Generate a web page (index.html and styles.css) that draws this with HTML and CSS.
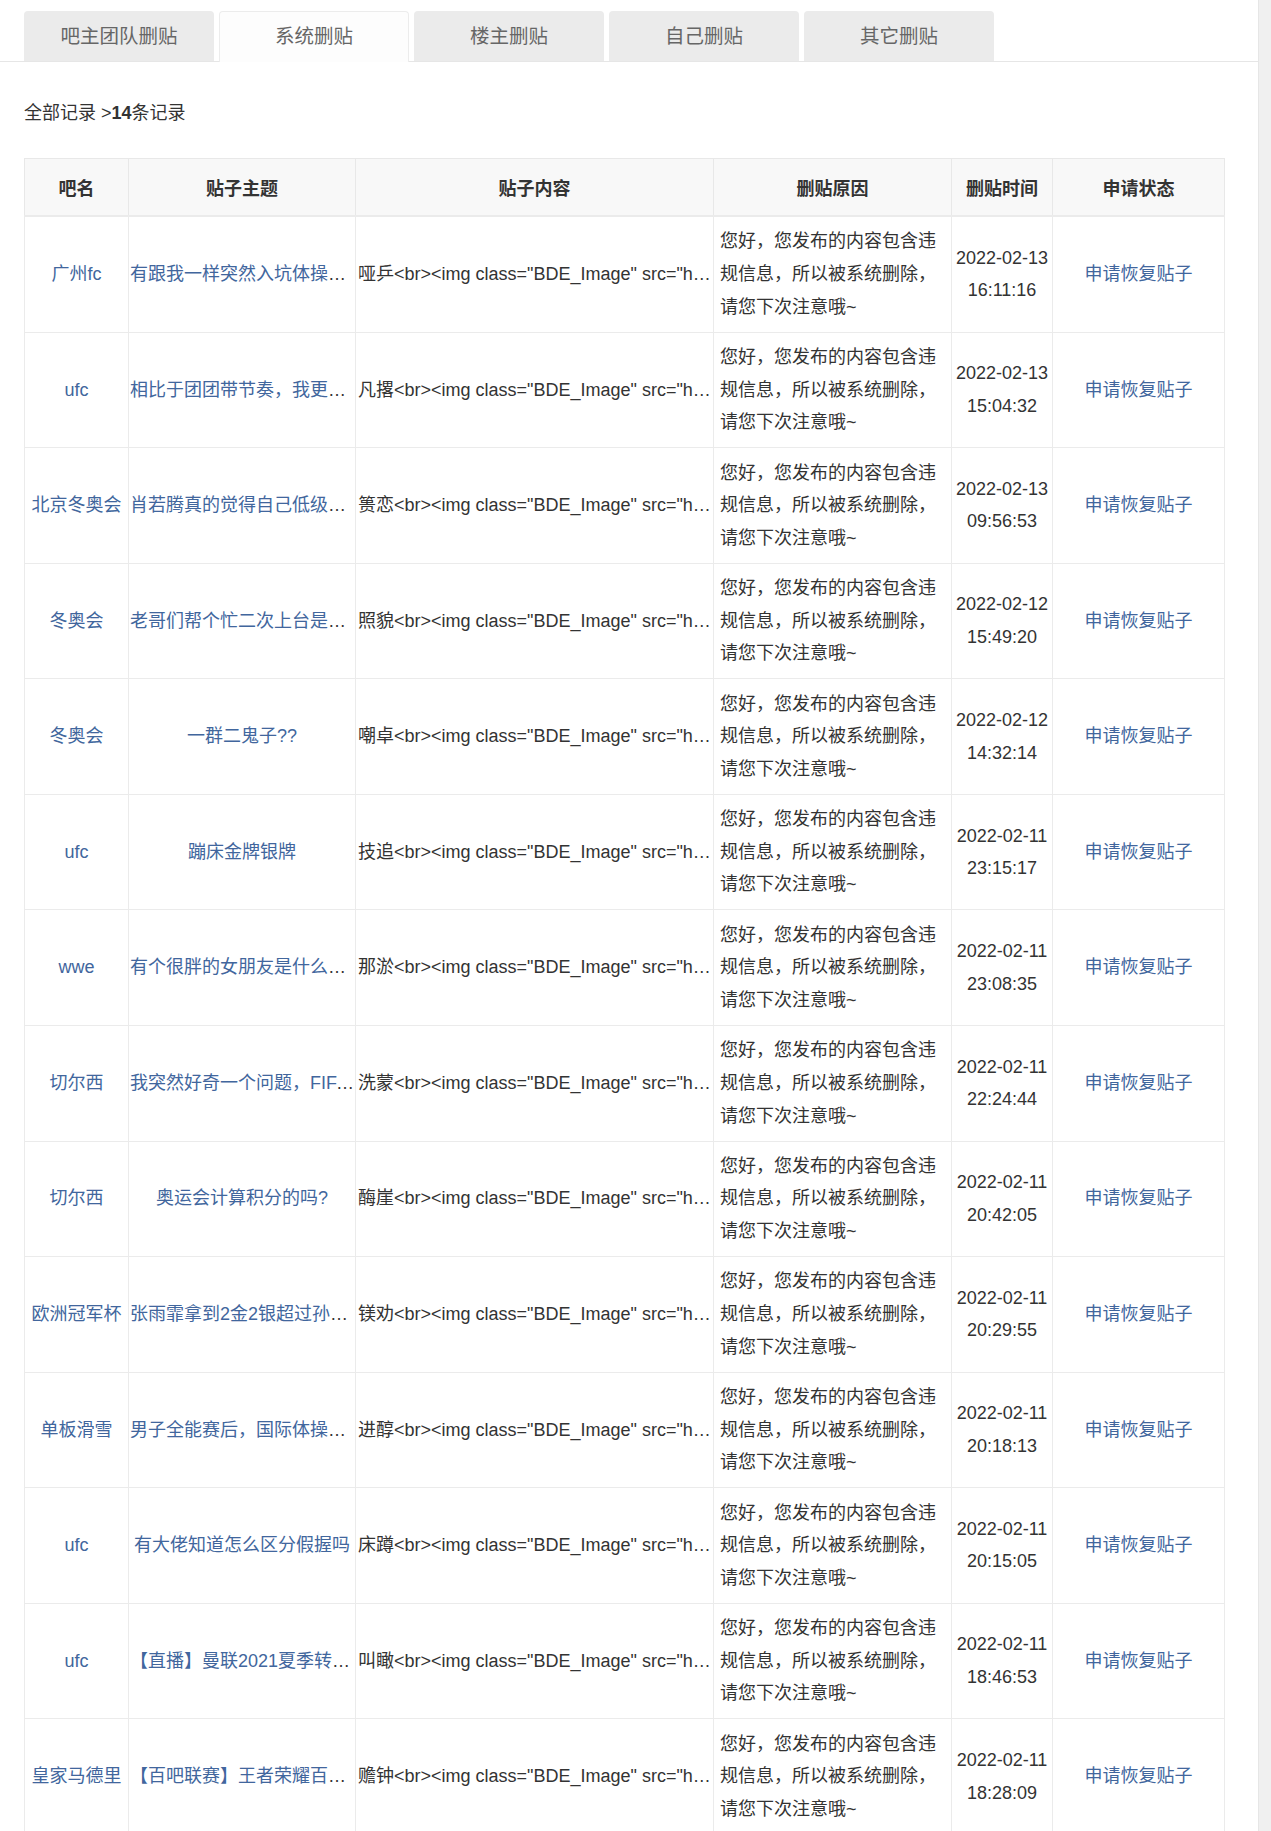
FILE: index.html
```html
<!DOCTYPE html>
<html lang="zh-CN">
<head>
<meta charset="utf-8">
<title>删贴记录</title>
<link rel="stylesheet" href="styles.css">
</head>
<body>
<div class="page">
  <div class="tabs">
    <a class="tab">吧主团队删贴</a>
    <a class="tab active">系统删贴</a>
    <a class="tab">楼主删贴</a>
    <a class="tab">自己删贴</a>
    <a class="tab">其它删贴</a>
  </div>
  <div class="crumb">全部记录 &gt;<b>14</b>条记录</div>
  <table class="records">
    <colgroup>
      <col class="c-bar"><col class="c-title"><col class="c-content"><col class="c-reason"><col class="c-time"><col class="c-status">
    </colgroup>
    <thead>
      <tr><th>吧名</th><th>贴子主题</th><th>贴子内容</th><th>删贴原因</th><th>删贴时间</th><th>申请状态</th></tr>
    </thead>
    <tbody>
      <tr><td class="bar"><a>广州fc</a></td><td class="title"><div class="clip"><a>有跟我一样突然入坑体操的吗</a></div></td><td class="content"><div class="clip">哑乒&lt;br&gt;&lt;img class="BDE_Image" src="https://imgsa.baidu.com/forum/pic/item/a1.jpg"&gt;</div></td><td class="reason">您好，您发布的内容包含违规信息，所以被系统删除，请您下次注意哦~</td><td class="time">2022-02-13 16:11:16</td><td class="status"><a>申请恢复贴子</a></td></tr>
      <tr><td class="bar"><a>ufc</a></td><td class="title"><div class="clip"><a>相比于团团带节奏，我更想知道</a></div></td><td class="content"><div class="clip">凡撂&lt;br&gt;&lt;img class="BDE_Image" src="https://imgsa.baidu.com/forum/pic/item/a2.jpg"&gt;</div></td><td class="reason">您好，您发布的内容包含违规信息，所以被系统删除，请您下次注意哦~</td><td class="time">2022-02-13 15:04:32</td><td class="status"><a>申请恢复贴子</a></td></tr>
      <tr><td class="bar"><a>北京冬奥会</a></td><td class="title"><div class="clip"><a>肖若腾真的觉得自己低级失误吗</a></div></td><td class="content"><div class="clip">篑恋&lt;br&gt;&lt;img class="BDE_Image" src="https://imgsa.baidu.com/forum/pic/item/a3.jpg"&gt;</div></td><td class="reason">您好，您发布的内容包含违规信息，所以被系统删除，请您下次注意哦~</td><td class="time">2022-02-13 09:56:53</td><td class="status"><a>申请恢复贴子</a></td></tr>
      <tr><td class="bar"><a>冬奥会</a></td><td class="title"><div class="clip"><a>老哥们帮个忙二次上台是什么</a></div></td><td class="content"><div class="clip">照貌&lt;br&gt;&lt;img class="BDE_Image" src="https://imgsa.baidu.com/forum/pic/item/a4.jpg"&gt;</div></td><td class="reason">您好，您发布的内容包含违规信息，所以被系统删除，请您下次注意哦~</td><td class="time">2022-02-12 15:49:20</td><td class="status"><a>申请恢复贴子</a></td></tr>
      <tr><td class="bar"><a>冬奥会</a></td><td class="title"><div class="clip"><a>一群二鬼子??</a></div></td><td class="content"><div class="clip">嘲卓&lt;br&gt;&lt;img class="BDE_Image" src="https://imgsa.baidu.com/forum/pic/item/a5.jpg"&gt;</div></td><td class="reason">您好，您发布的内容包含违规信息，所以被系统删除，请您下次注意哦~</td><td class="time">2022-02-12 14:32:14</td><td class="status"><a>申请恢复贴子</a></td></tr>
      <tr><td class="bar"><a>ufc</a></td><td class="title"><div class="clip"><a>蹦床金牌银牌</a></div></td><td class="content"><div class="clip">技追&lt;br&gt;&lt;img class="BDE_Image" src="https://imgsa.baidu.com/forum/pic/item/a6.jpg"&gt;</div></td><td class="reason">您好，您发布的内容包含违规信息，所以被系统删除，请您下次注意哦~</td><td class="time">2022-02-11 23:15:17</td><td class="status"><a>申请恢复贴子</a></td></tr>
      <tr><td class="bar"><a>wwe</a></td><td class="title"><div class="clip"><a>有个很胖的女朋友是什么体验</a></div></td><td class="content"><div class="clip">那淤&lt;br&gt;&lt;img class="BDE_Image" src="https://imgsa.baidu.com/forum/pic/item/a7.jpg"&gt;</div></td><td class="reason">您好，您发布的内容包含违规信息，所以被系统删除，请您下次注意哦~</td><td class="time">2022-02-11 23:08:35</td><td class="status"><a>申请恢复贴子</a></td></tr>
      <tr><td class="bar"><a>切尔西</a></td><td class="title"><div class="clip"><a>我突然好奇一个问题，FIFA的</a></div></td><td class="content"><div class="clip">洗蒙&lt;br&gt;&lt;img class="BDE_Image" src="https://imgsa.baidu.com/forum/pic/item/a8.jpg"&gt;</div></td><td class="reason">您好，您发布的内容包含违规信息，所以被系统删除，请您下次注意哦~</td><td class="time">2022-02-11 22:24:44</td><td class="status"><a>申请恢复贴子</a></td></tr>
      <tr><td class="bar"><a>切尔西</a></td><td class="title"><div class="clip"><a>奥运会计算积分的吗?</a></div></td><td class="content"><div class="clip">酶崖&lt;br&gt;&lt;img class="BDE_Image" src="https://imgsa.baidu.com/forum/pic/item/a9.jpg"&gt;</div></td><td class="reason">您好，您发布的内容包含违规信息，所以被系统删除，请您下次注意哦~</td><td class="time">2022-02-11 20:42:05</td><td class="status"><a>申请恢复贴子</a></td></tr>
      <tr><td class="bar"><a>欧洲冠军杯</a></td><td class="title"><div class="clip"><a>张雨霏拿到2金2银超过孙杨了吗</a></div></td><td class="content"><div class="clip">镁劝&lt;br&gt;&lt;img class="BDE_Image" src="https://imgsa.baidu.com/forum/pic/item/b1.jpg"&gt;</div></td><td class="reason">您好，您发布的内容包含违规信息，所以被系统删除，请您下次注意哦~</td><td class="time">2022-02-11 20:29:55</td><td class="status"><a>申请恢复贴子</a></td></tr>
      <tr><td class="bar"><a>单板滑雪</a></td><td class="title"><div class="clip"><a>男子全能赛后，国际体操联合会</a></div></td><td class="content"><div class="clip">进醇&lt;br&gt;&lt;img class="BDE_Image" src="https://imgsa.baidu.com/forum/pic/item/b2.jpg"&gt;</div></td><td class="reason">您好，您发布的内容包含违规信息，所以被系统删除，请您下次注意哦~</td><td class="time">2022-02-11 20:18:13</td><td class="status"><a>申请恢复贴子</a></td></tr>
      <tr><td class="bar"><a>ufc</a></td><td class="title"><div class="clip"><a>有大佬知道怎么区分假握吗</a></div></td><td class="content"><div class="clip">床蹲&lt;br&gt;&lt;img class="BDE_Image" src="https://imgsa.baidu.com/forum/pic/item/b3.jpg"&gt;</div></td><td class="reason">您好，您发布的内容包含违规信息，所以被系统删除，请您下次注意哦~</td><td class="time">2022-02-11 20:15:05</td><td class="status"><a>申请恢复贴子</a></td></tr>
      <tr><td class="bar"><a>ufc</a></td><td class="title"><div class="clip"><a>【直播】曼联2021夏季转会窗口</a></div></td><td class="content"><div class="clip">叫瞰&lt;br&gt;&lt;img class="BDE_Image" src="https://imgsa.baidu.com/forum/pic/item/b4.jpg"&gt;</div></td><td class="reason">您好，您发布的内容包含违规信息，所以被系统删除，请您下次注意哦~</td><td class="time">2022-02-11 18:46:53</td><td class="status"><a>申请恢复贴子</a></td></tr>
      <tr><td class="bar"><a>皇家马德里</a></td><td class="title"><div class="clip"><a>【百吧联赛】王者荣耀百吧联赛</a></div></td><td class="content"><div class="clip">赡钟&lt;br&gt;&lt;img class="BDE_Image" src="https://imgsa.baidu.com/forum/pic/item/b5.jpg"&gt;</div></td><td class="reason">您好，您发布的内容包含违规信息，所以被系统删除，请您下次注意哦~</td><td class="time">2022-02-11 18:28:09</td><td class="status"><a>申请恢复贴子</a></td></tr>
    </tbody>
  </table>
</div>
<div class="scrollbar"></div>
</body>
</html>
```

FILE: styles.css
```css
html, body {
  margin: 0;
  padding: 0;
  background: #fff;
}
body {
  font-family: "Liberation Sans", "Noto Sans CJK SC", sans-serif;
  font-size: 18px;
  color: #333;
}
.page {
  width: 1259px;
}
.tabs {
  display: flex;
  gap: 5px;
  padding: 11px 0 0 24px;
  border-bottom: 1px solid #e6e6e6;
  height: 50px;
}
.tab {
  width: 190px;
  height: 50px;
  box-sizing: border-box;
  background: #ebebeb;
  border-radius: 4px 4px 0 0;
  color: #666;
  font-size: 19.5px;
  line-height: 50px;
  text-align: center;
}
.tab.active {
  background: #fdfdfd;
  border: 1px solid #ececec;
  border-bottom: none;
  height: 51px;
  line-height: 49px;
  margin-bottom: -1px;
}
.crumb {
  padding: 0 0 0 24px;
  margin-top: 37px;
  line-height: 28px;
  height: 28px;
}
.crumb b {
  font-weight: bold;
}
.records {
  margin: 31px 0 0 24px;
  width: 1200px;
  border-collapse: collapse;
  table-layout: fixed;
  border: 1px solid #e3e3e3;
}
.c-bar { width: 104px; }
.c-title { width: 227px; }
.c-content { width: 358px; }
.c-reason { width: 238px; }
.c-time { width: 101px; }
.c-status { width: 172px; }
.records th {
  background: #f8f8f8;
  height: 56px;
  padding: 0;
  font-weight: bold;
  font-size: 18px;
  color: #333;
  border: 1px solid #e8e8e8;
  border-bottom: 2px solid #ebebeb;
}
.records td {
  border: 1px solid #ebebeb;
  padding: 8.4px 0;
  line-height: 32.6px;
  vertical-align: middle;
}
.records a {
  color: #41669d;
  text-decoration: none;
}
.bar, .title, .time, .status {
  text-align: center;
}
.clip {
  white-space: nowrap;
  overflow: hidden;
  text-overflow: ellipsis;
}
.records td.title {
  padding-left: 1px;
  padding-right: 1px;
}
.records td.content {
  padding-left: 2px;
  padding-right: 2px;
}
.records td.reason {
  padding-left: 6px;
  padding-right: 7px;
}
.records td.time {
  padding-left: 2px;
  padding-right: 2px;
}
.scrollbar {
  position: fixed;
  top: 0;
  right: 0;
  width: 12px;
  height: 100%;
  background: #f0f0f0;
  border-left: 1px solid #e6e6e6;
}
```
